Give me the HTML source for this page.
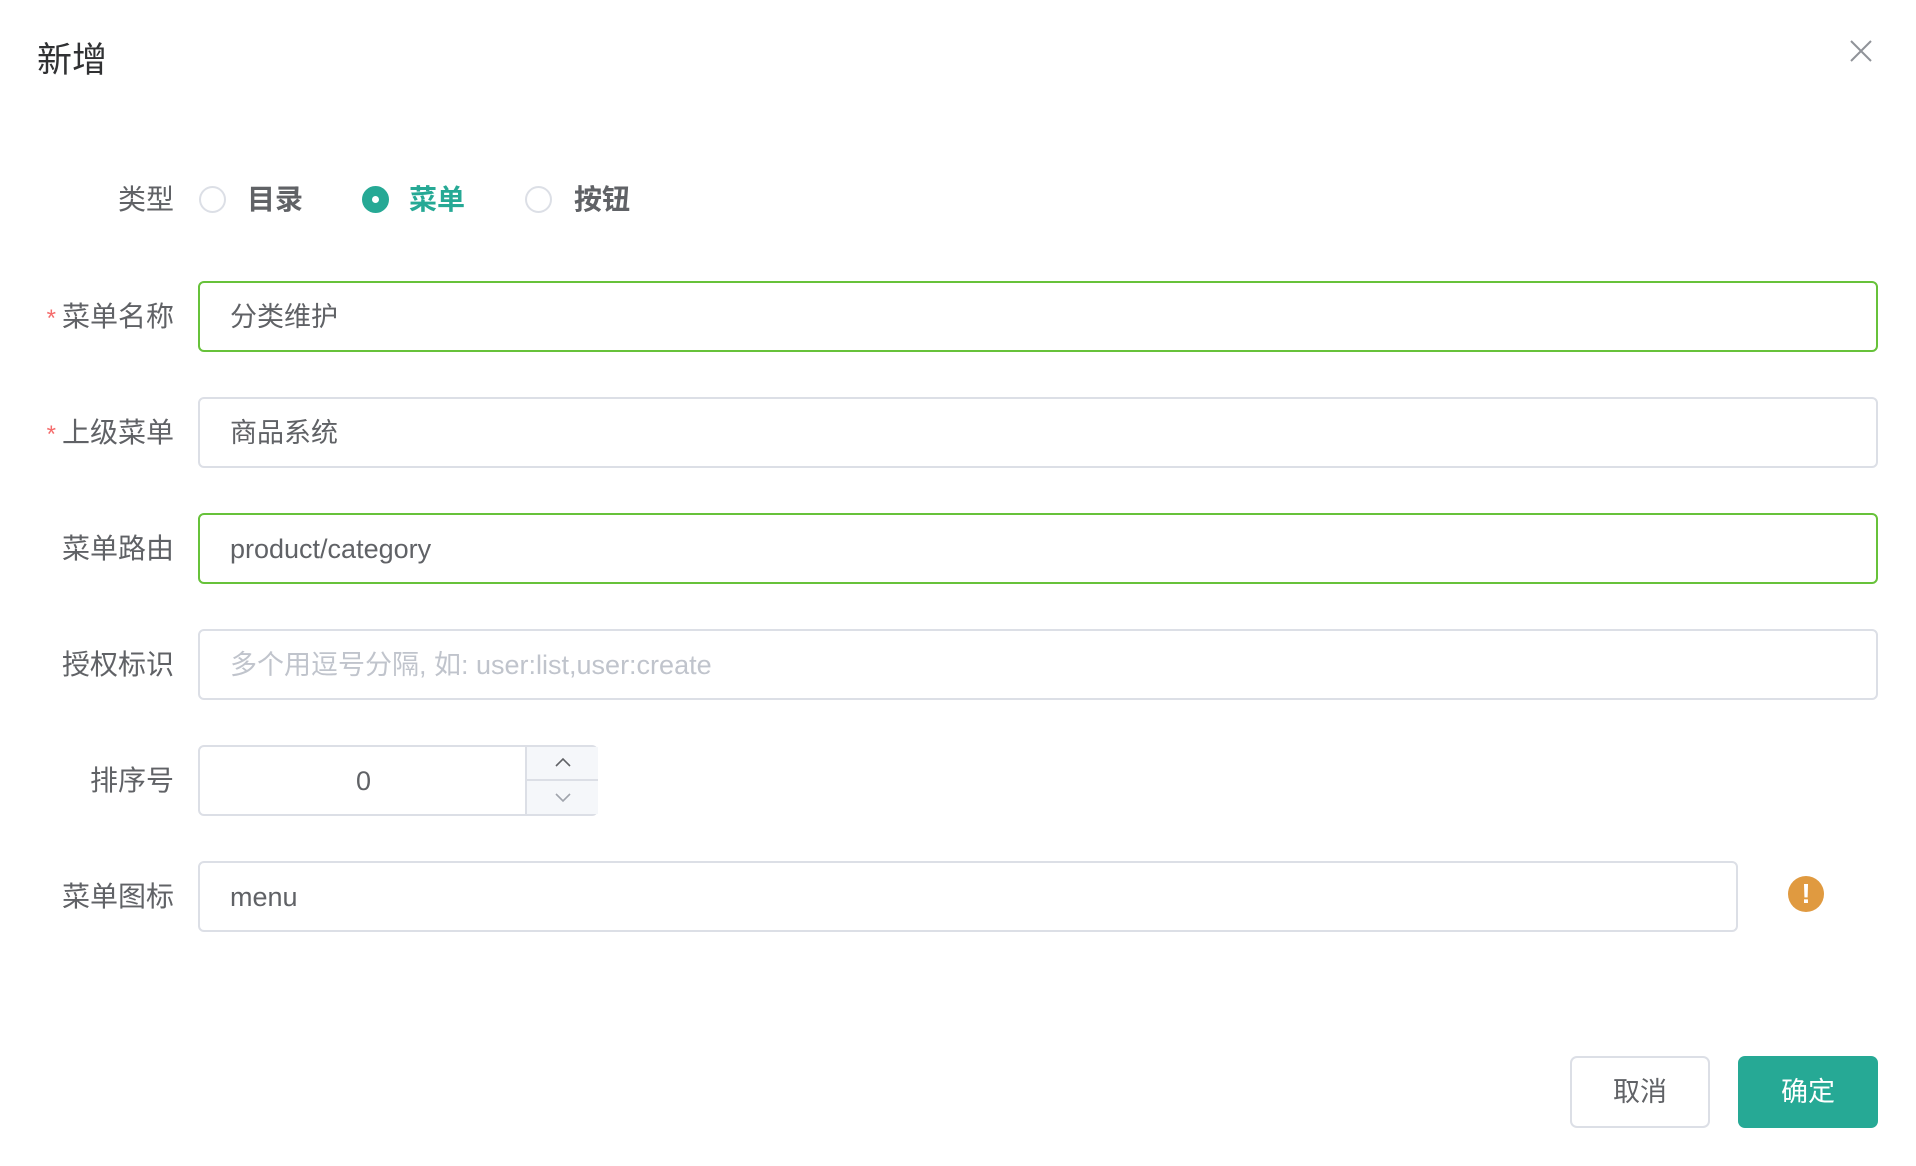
<!DOCTYPE html>
<html><head><meta charset="utf-8"><style>
*{box-sizing:border-box;margin:0;padding:0}
body{width:1916px;height:1166px;background:#fff;position:relative;overflow:hidden;font-family:"Liberation Sans","Noto Sans CJK SC",sans-serif;color:#606266}
.a{position:absolute}
.title{left:37px;top:39px;font-size:35px;color:#303133;line-height:44px}
.lbl{right:calc(1916px - 174px);font-size:28px;line-height:40px;text-align:right;white-space:nowrap;color:#606266}
.req{color:#f56c6c;margin-right:6px;font-size:24px}
.inp{left:198px;width:1680px;height:71px;border:2px solid #dcdfe6;border-radius:6px;font-size:27px;line-height:69px;padding-left:30px;color:#606266}
.ok{border-color:#67c23a}
.radio{width:27px;height:27px;border-radius:50%;border:2px solid #dcdfe6;top:186px}
.rt{top:180px;font-size:28px;line-height:40px;font-weight:bold;color:#606266}
</style></head><body>
<div class="a title">新增</div>
<svg class="a" style="left:1850px;top:40px" width="22" height="22" viewBox="0 0 22 22"><path d="M1 1L21 21M21 1L1 21" stroke="#909399" stroke-width="2"/></svg>

<div class="a lbl" style="top:180px">类型</div>
<div class="a radio" style="left:199px"></div>
<div class="a rt" style="left:247px">目录</div>
<div class="a radio" style="left:362px;background:#26a995;border-color:#26a995"><div class="a" style="left:8px;top:8px;width:7px;height:7px;border-radius:50%;background:#fff"></div></div>
<div class="a rt" style="left:409px;color:#26a995">菜单</div>
<div class="a radio" style="left:525px"></div>
<div class="a rt" style="left:574px">按钮</div>

<div class="a lbl" style="top:297px"><span class="req">*</span>菜单名称</div>
<div class="a inp ok" style="top:281px">分类维护</div>
<div class="a lbl" style="top:413px"><span class="req">*</span>上级菜单</div>
<div class="a inp" style="top:397px">商品系统</div>
<div class="a lbl" style="top:529px">菜单路由</div>
<div class="a inp ok" style="top:513px">product/category</div>
<div class="a lbl" style="top:645px">授权标识</div>
<div class="a inp" style="top:629px;color:#c0c4cc">多个用逗号分隔, 如: user:list,user:create</div>
<div class="a lbl" style="top:761px">排序号</div>
<div class="a inp" style="top:745px;width:400px;padding:0;">
  <div class="a" style="left:0;width:327px;text-align:center;top:0">0</div>
  <div class="a" style="left:325px;top:0;width:73px;height:67px;border-left:2px solid #dcdfe6;background:#f5f7fa">
    <div class="a" style="left:0;top:32px;width:71px;height:2px;background:#dcdfe6"></div>
    <svg class="a" style="left:27px;top:10px" width="18" height="12" viewBox="0 0 18 12"><path d="M2 9L9 2L16 9" fill="none" stroke="#606266" stroke-width="1.6"/></svg>
    <svg class="a" style="left:27px;top:44px" width="18" height="12" viewBox="0 0 18 12"><path d="M2 3L9 10L16 3" fill="none" stroke="#a0a4ac" stroke-width="1.6"/></svg>
  </div>
</div>
<div class="a lbl" style="top:877px">菜单图标</div>
<div class="a inp" style="top:861px;width:1540px">menu</div>
<div class="a" style="left:1788px;top:876px;width:36px;height:36px;border-radius:50%;background:#e09a40;color:#fff;text-align:center;font-weight:bold;font-size:28px;line-height:36px">!</div>

<div class="a" style="left:1570px;top:1056px;width:140px;height:72px;border:2px solid #dcdfe6;border-radius:7px;text-align:center;line-height:68px;font-size:27px">取消</div>
<div class="a" style="left:1738px;top:1056px;width:140px;height:72px;background:#26a995;border-radius:7px;text-align:center;line-height:72px;font-size:27px;color:#fff">确定</div>
</body></html>
